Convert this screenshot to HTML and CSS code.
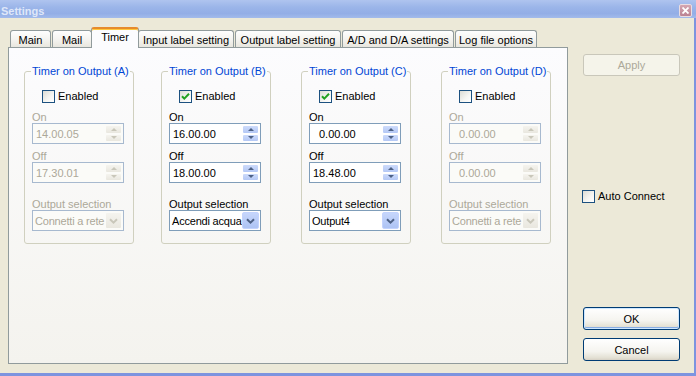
FILE: index.html
```html
<!DOCTYPE html>
<html lang="en">
  <head>
    <meta charset="UTF-8" />
    <title>Settings</title>
    <link rel="stylesheet" href="styles.css">
  </head>
  <body>
    <div class="window">
      <div class="titlebar">
        <span class="title">Settings</span>
        <span class="close">
          <svg width="7" height="7" viewBox="0 0 7 7"><path d="M0.5 0.5 L6.5 6.5 M6.5 0.5 L0.5 6.5" stroke="#fff" stroke-width="1.8" /></svg>
        </span>
      </div>

      <div class="frame">
        <div class="main">
          <div class="tabs">
            <div class="tab tab-main">Main</div>
            <div class="tab tab-mail">Mail</div>
            <div class="tab tab-timer active">Timer</div>
            <div class="tab tab-input">Input label setting</div>
            <div class="tab tab-output">Output label setting</div>
            <div class="tab tab-ad">A/D and D/A settings</div>
            <div class="tab tab-log">Log file options</div>
          </div>

          <div class="panel">
            <div class="groups">
              <fieldset class="group disabled">
                <legend>Timer on Output (A)</legend>
                <label class="check"><span class="box"></span>Enabled</label>
                <div class="field-label">On</div>
                <div class="spin-input">
                  <span class="value">14.00.05</span>
                  <span class="spin"><span class="spin-btn up"></span><span class="spin-btn down"></span></span>
                </div>
                <div class="field-label">Off</div>
                <div class="spin-input">
                  <span class="value">17.30.01</span>
                  <span class="spin"><span class="spin-btn up"></span><span class="spin-btn down"></span></span>
                </div>
                <div class="field-label sel-label">Output selection</div>
                <div class="select">
                  <span class="value">Connetti a rete</span>
                  <span class="drop"><svg width="9" height="6" viewBox="0 0 9 6"><path d="M1 1.2 L4.5 4.6 L8 1.2" fill="none" stroke-width="2" /></svg></span>
                </div>
              </fieldset>

              <fieldset class="group">
                <legend>Timer on Output (B)</legend>
                <label class="check"><span class="box checked"><svg width="11" height="11" viewBox="0 0 11 11"><path d="M2 5.2 L4.3 7.6 L9 2.8" fill="none" stroke="#21a121" stroke-width="2" /></svg></span>Enabled</label>
                <div class="field-label">On</div>
                <div class="spin-input">
                  <span class="value">16.00.00</span>
                  <span class="spin"><span class="spin-btn up"></span><span class="spin-btn down"></span></span>
                </div>
                <div class="field-label">Off</div>
                <div class="spin-input">
                  <span class="value">18.00.00</span>
                  <span class="spin"><span class="spin-btn up"></span><span class="spin-btn down"></span></span>
                </div>
                <div class="field-label sel-label">Output selection</div>
                <div class="select">
                  <span class="value">Accendi acqua</span>
                  <span class="drop"><svg width="9" height="6" viewBox="0 0 9 6"><path d="M1 1.2 L4.5 4.6 L8 1.2" fill="none" stroke-width="2" /></svg></span>
                </div>
              </fieldset>

              <fieldset class="group">
                <legend>Timer on Output (C)</legend>
                <label class="check"><span class="box checked"><svg width="11" height="11" viewBox="0 0 11 11"><path d="M2 5.2 L4.3 7.6 L9 2.8" fill="none" stroke="#21a121" stroke-width="2" /></svg></span>Enabled</label>
                <div class="field-label">On</div>
                <div class="spin-input">
                  <span class="value short">0.00.00</span>
                  <span class="spin"><span class="spin-btn up"></span><span class="spin-btn down"></span></span>
                </div>
                <div class="field-label">Off</div>
                <div class="spin-input">
                  <span class="value">18.48.00</span>
                  <span class="spin"><span class="spin-btn up"></span><span class="spin-btn down"></span></span>
                </div>
                <div class="field-label sel-label">Output selection</div>
                <div class="select">
                  <span class="value">Output4</span>
                  <span class="drop"><svg width="9" height="6" viewBox="0 0 9 6"><path d="M1 1.2 L4.5 4.6 L8 1.2" fill="none" stroke-width="2" /></svg></span>
                </div>
              </fieldset>

              <fieldset class="group disabled">
                <legend>Timer on Output (D)</legend>
                <label class="check"><span class="box"></span>Enabled</label>
                <div class="field-label">On</div>
                <div class="spin-input">
                  <span class="value short">0.00.00</span>
                  <span class="spin"><span class="spin-btn up"></span><span class="spin-btn down"></span></span>
                </div>
                <div class="field-label">Off</div>
                <div class="spin-input">
                  <span class="value short">0.00.00</span>
                  <span class="spin"><span class="spin-btn up"></span><span class="spin-btn down"></span></span>
                </div>
                <div class="field-label sel-label">Output selection</div>
                <div class="select">
                  <span class="value">Connetti a rete</span>
                  <span class="drop"><svg width="9" height="6" viewBox="0 0 9 6"><path d="M1 1.2 L4.5 4.6 L8 1.2" fill="none" stroke-width="2" /></svg></span>
                </div>
              </fieldset>
            </div>
          </div>
        </div>

        <div class="side">
          <button class="btn" disabled>Apply</button>
          <label class="check auto"><span class="box"></span>Auto Connect</label>
          <button class="btn default">OK</button>
          <button class="btn cancel">Cancel</button>
        </div>
      </div>
    </div>
  </body>
</html>
```

FILE: styles.css
```css
* {
  box-sizing: border-box;
}
body {
  margin: 0;
  font-family: "Liberation Sans", Arial, sans-serif;
  font-size: 11px;
  color: #000;
  background: #ece9d8;
}
.window {
  width: 696px;
  height: 376px;
  display: flex;
  flex-direction: column;
  background: #ece9d8;
}

/* title bar (inactive XP look) */
.titlebar {
  height: 18px;
  flex: none;
  display: flex;
  align-items: center;
  justify-content: space-between;
  padding: 0 4px 0 1px;
  background: linear-gradient(#afc4ef, #9bb5e9 40%, #93aee6 75%, #a3bbeb);
}
.title {
  font-weight: bold;
  font-size: 11px;
  color: #dfe7f9;
  padding-top: 3px;
}
.close {
  width: 13px;
  height: 13px;
  margin-top: 3px;
  display: flex;
  align-items: center;
  justify-content: center;
  border: 1px solid #eadde2;
  border-radius: 2px;
  background: linear-gradient(#d4a6b1, #bb8393);
}

.frame {
  flex: 1;
  display: flex;
  border-right: 2px solid #7d94df;
  border-bottom: 3px solid #7d94df;
}
.main {
  width: 560px;
  margin: 9px 0 0 8px;
  display: flex;
  flex-direction: column;
}

/* tabs */
.tabs {
  height: 20px;
  display: flex;
  align-items: flex-end;
  padding-left: 2px;
  position: relative;
  z-index: 1;
}
.tab {
  height: 17px;
  margin-right: 1px;
  padding-top: 2px;
  line-height: 14px;
  text-align: center;
  white-space: nowrap;
  border: 1px solid #919b9c;
  border-bottom: none;
  border-radius: 3px 3px 0 0;
  background: linear-gradient(#fefefe, #f4f3ef 55%, #e8e6de);
}
.tab-main { width: 41px; }
.tab-mail { width: 40px; }
.tab-timer { width: 44px; }
.tab-input { width: 96px; }
.tab-output { width: 106px; }
.tab-ad { width: 112px; }
.tab-log { width: 82px; }
.tab.active {
  width: 48px;
  height: 21px;
  margin: 0 -1px -1px -2px;
  padding-top: 1px;
  border-top: 2px solid #e68b2c;
  box-shadow: inset 0 1px #ffc83c;
  background: #fcfcfe;
}

.panel {
  height: 317px;
  padding: 17px 0 0 15px;
  border: 1px solid #919b9c;
  background: linear-gradient(#fcfcfe, #f4f3ee);
}
.groups {
  display: flex;
  gap: 30px;
}

/* group boxes */
.group {
  width: 110px;
  margin: 0;
  padding: 0 0 12px;
  border: 1px solid #d0d0bf;
  border-radius: 3px;
}
.group:first-child {
  margin-right: -3px;
}
.group legend {
  margin-left: 6px;
  padding: 0 1px;
  line-height: 13px;
  color: #0046d5;
}
.group > .check {
  margin: 12px 0 0 17px;
}
.check {
  display: flex;
  align-items: center;
  height: 13px;
  line-height: 13px;
}
.box {
  width: 13px;
  height: 13px;
  margin-right: 3px;
  flex: none;
  display: flex;
  align-items: center;
  justify-content: center;
  border: 1px solid #1c5180;
  background: linear-gradient(135deg, #dcdcd5, #f6f6f3 60%, #fff);
}
.field-label {
  margin: 6px 0 0 7px;
  line-height: 12px;
}
.check + .field-label {
  margin-top: 8px;
}
.sel-label {
  margin-top: 15px;
}
.spin-input,
.select {
  width: 92px;
  height: 21px;
  margin-left: 7px;
  display: flex;
  align-items: center;
  border: 1px solid #7f9db9;
  background: #fff;
}
.value {
  flex: 1;
  min-width: 0;
  padding-left: 3px;
  white-space: nowrap;
  overflow: hidden;
}
.value.short {
  padding-left: 9px;
}
.select .value {
  padding-left: 2px;
  letter-spacing: -0.2px;
}
.spin {
  width: 17px;
  height: 17px;
  margin-right: 1px;
  flex: none;
  display: flex;
  flex-direction: column;
}
.spin-btn {
  flex: 1;
  display: flex;
  align-items: center;
  justify-content: center;
  border: 1px solid #fff;
  border-radius: 2px;
  background: linear-gradient(#cddbfb, #b4c8f5);
}
.spin-btn::after {
  content: "";
  border-left: 3px solid transparent;
  border-right: 3px solid transparent;
}
.spin-btn.up::after {
  border-bottom: 3px solid #4d6185;
}
.spin-btn.down::after {
  border-top: 3px solid #4d6185;
}
.drop {
  width: 17px;
  height: 17px;
  margin-right: 1px;
  flex: none;
  display: flex;
  align-items: center;
  justify-content: center;
  border-radius: 2px;
  border: 1px solid #c3d3fd;
  background: linear-gradient(#c6d6fb, #adc3f4);
  stroke: #4d6185;
}

/* disabled groups */
.disabled .field-label,
.disabled .value {
  color: #aca899;
}
.disabled .spin-input,
.disabled .select {
  border-color: #a7b9cf;
  background: #fbfbf8;
}
.disabled .spin-btn,
.disabled .drop {
  border-color: #fbfbf8;
  background: linear-gradient(#f5f4ef, #e9e7df);
  stroke: #c9c7ba;
}
.disabled .spin-btn.up::after {
  border-bottom-color: #c9c7ba;
}
.disabled .spin-btn.down::after {
  border-top-color: #c9c7ba;
}

/* right column */
.side {
  width: 97px;
  margin-left: 15px;
  display: flex;
  flex-direction: column;
  padding: 36px 0 12px;
}
.btn {
  height: 22px;
  padding: 0;
  font-family: inherit;
  font-size: 11px;
  color: #000;
  border: 1px solid #003c74;
  border-radius: 3px;
  background: linear-gradient(#fff, #f5f4ef 60%, #e3e0d3 90%, #d6d0c5);
}
.btn:disabled {
  color: #aca899;
  border-color: #c9c7ba;
  background: #f5f4ea;
}
.auto {
  margin: 114px 0 0 -1px;
}
.default {
  height: 23px;
  margin-top: auto;
  box-shadow: inset 0 0 0 1px #cee7ff, inset 0 -1px 0 1px #89ade4;
}
.cancel {
  height: 23px;
  margin-top: 8px;
}
```
